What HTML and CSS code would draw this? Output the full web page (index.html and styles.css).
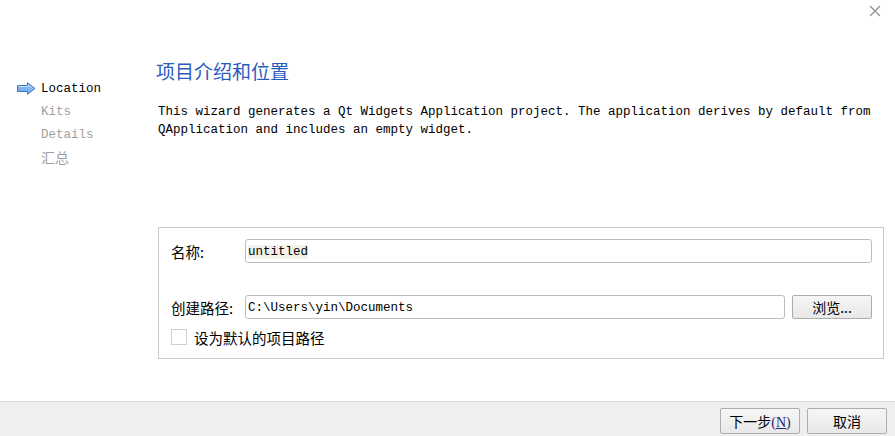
FILE: index.html
```html
<!DOCTYPE html>
<html>
<head>
<meta charset="utf-8">
<link rel="stylesheet" href="styles.css">
</head>
<body>
<div class="window">
  <div class="close" aria-label="close">
    <svg width="12" height="12" viewBox="0 0 12 12"><path d="M1 1L11 11M11 1L1 11" stroke="#8c8c8c" stroke-width="1.2" fill="none"/></svg>
  </div>
  <div class="content">
    <div class="sidebar">
      <div class="step current">
        <svg class="arrow" width="19" height="13" viewBox="0 0 19 13"><path d="M0.5 3.5H10.5V0.8L18 6.5L10.5 12.2V9.5H0.5Z" fill="#7fb2ee" stroke="#3d74c4" stroke-width="1"/><path d="M1.5 4.5H11.5V3L15.5 6.5" fill="none" stroke="#c6defa" stroke-width="1"/></svg>
        <span>Location</span>
      </div>
      <div class="step"><span>Kits</span></div>
      <div class="step"><span>Details</span></div>
      <div class="step cjk"><span>汇总</span></div>
    </div>
    <div class="main">
      <h1 class="title">项目介绍和位置</h1>
      <p class="desc">This wizard generates a Qt Widgets Application project. The application derives by default from QApplication and includes an empty widget.</p>
      <div class="group">
        <div class="row">
          <label class="lbl">名称:</label>
          <div class="input"><span class="sel">untitled</span></div>
        </div>
        <div class="row row2">
          <label class="lbl">创建路径:</label>
          <div class="input short">C:\Users\yin\Documents</div>
          <button class="btn browse">浏览...</button>
        </div>
        <div class="check">
          <span class="box"></span>
          <span class="clabel">设为默认的项目路径</span>
        </div>
      </div>
    </div>
  </div>
  <div class="footer">
    <button class="btn fbtn">下一步<span class="mn">(<u>N</u>)</span></button>
    <button class="btn fbtn">取消</button>
  </div>
</div>
</body>
</html>
```

FILE: styles.css
```css
* { box-sizing: border-box; }
html, body { margin: 0; padding: 0; background: #fff; }
body {
  width: 895px;
  height: 436px;
  overflow: hidden;
  font-family: "Liberation Mono", "Noto Sans CJK SC", monospace;
  font-size: 12.5px;
  color: #000;
}
.window {
  position: relative;
  width: 895px;
  height: 436px;
  display: flex;
  flex-direction: column;
}
.close {
  position: absolute;
  top: 5px;
  left: 869px;
  width: 12px;
  height: 12px;
}
.close svg { display: block; }
.content {
  flex: 1;
  display: flex;
}
.sidebar {
  width: 157px;
  padding-top: 78px;
  padding-left: 17px;
}
.step {
  height: 23px;
  line-height: 23px;
  padding-left: 24px;
  color: #a0a0a0;
  position: relative;
  white-space: nowrap;
}
.step.current { color: #000; }
.step.cjk {
  font-family: "Noto Sans CJK SC", sans-serif;
  font-size: 14px;
  line-height: 21px;
}
.arrow {
  position: absolute;
  left: 0;
  top: 4px;
}
.main {
  flex: 1;
  padding-top: 58px;
  padding-right: 11px;
}
.title {
  margin: 0;
  font-family: "Noto Sans CJK SC", sans-serif;
  font-weight: normal;
  font-size: 19px;
  line-height: 26px;
  color: #2a5cbc;
}
.desc {
  margin: 19px 0 0 2px;
  line-height: 18px;
  width: 720px;
}
.group {
  margin: 88px 0 0 2px;
  width: 726px;
  height: 132px;
  border: 1px solid #c9c9c9;
  padding: 11px 11px 0 12px;
}
.row {
  display: flex;
  align-items: center;
  height: 24px;
}
.row2 { margin-top: 32px; }
.lbl {
  width: 74px;
  font-family: "Noto Sans CJK SC", sans-serif;
  font-size: 14.5px;
  white-space: nowrap;
}
.input {
  flex: 1;
  height: 24px;
  border: 1px solid #bdbdbd;
  border-radius: 3px;
  line-height: 22px;
  padding: 1px 0 0 2px;
  background: #fff;
}
.input.short { flex: none; width: 540px; }
.sel { background: #f4f1ea; }
.btn {
  font-family: "Noto Sans CJK SC", sans-serif;
  font-size: 14px;
  border: 1px solid #adadad;
  border-radius: 2px;
  background: linear-gradient(#f6f6f6, #e8e8e8);
  color: #000;
  padding: 0;
  line-height: 22px;
}
.browse {
  margin-left: 7px;
  width: 80px;
  height: 24px;
}
.check {
  display: flex;
  align-items: center;
  margin-top: 10px;
  height: 16px;
}
.box {
  width: 16px;
  height: 16px;
  border: 1px solid #cfcfcf;
  background: #fff;
}
.clabel {
  margin-left: 7px;
  font-family: "Noto Sans CJK SC", sans-serif;
  font-size: 14.5px;
  white-space: nowrap;
}
.footer {
  height: 35px;
  border-top: 1px solid #dcdcdc;
  background: #efefef;
  display: flex;
  justify-content: flex-end;
  align-items: flex-start;
  padding: 6px 8px 0 0;
  gap: 7px;
}
.fbtn {
  width: 80px;
  height: 26px;
  line-height: 24px;
}
.mn {
  font-family: "Liberation Serif", serif;
  font-size: 14px;
  color: #1a237e;
}
```
